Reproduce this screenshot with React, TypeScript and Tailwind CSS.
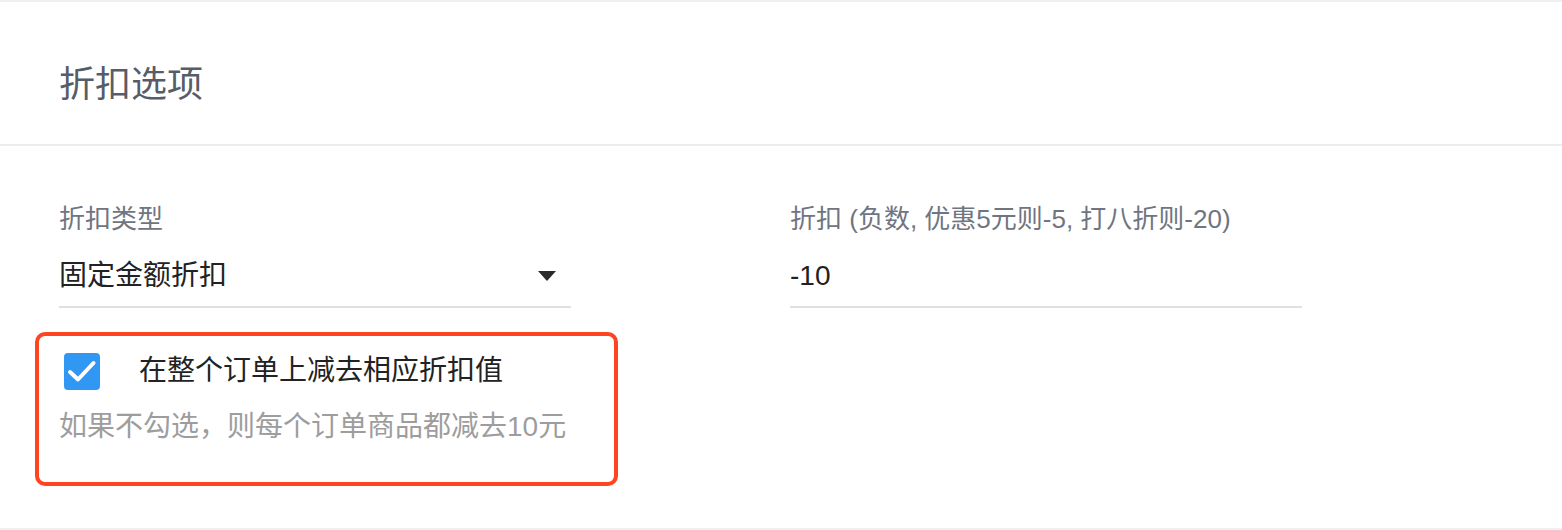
export default function App() {
  const font = { fontFamily: '"Liberation Sans", "Noto Sans CJK SC", sans-serif' }

  return (
    <div className="w-full h-[530px] bg-white border-t-2 border-b-2 border-[#efeff4] flex flex-col" style={font}>
      <div className="h-[144px] shrink-0 border-b-2 border-[#ededf1] px-[59px] pt-[57px]">
        <h2 className="text-[36px] leading-[52px] text-[#565c68]">折扣选项</h2>
      </div>

      <div className="px-[59px] pt-[55px]">
        <div className="flex gap-[219px]">
          <div className="w-[512px]">
            <label className="block text-[26px] leading-[36px] text-[#6f7581]">折扣类型</label>
            <div className="h-[71px] pt-[8px] flex items-center justify-between border-b-2 border-[#e0e0e0] pr-[15px]">
              <span className="text-[28px] text-[#222]">固定金额折扣</span>
              <svg width="18" height="10" viewBox="0 0 18 10">
                <path d="M0 0h18L9 10z" fill="#2a2a2a" />
              </svg>
            </div>
          </div>
          <div className="w-[512px]">
            <label className="block text-[26px] leading-[36px] text-[#6f7581]">折扣 (负数, 优惠5元则-5, 打八折则-20)</label>
            <div className="h-[71px] pt-[8px] flex items-center border-b-2 border-[#e0e0e0]">
              <span className="text-[28px] text-[#222]">-10</span>
            </div>
          </div>
        </div>

        <div className="mt-[24px] -ml-[24px] w-[583px] h-[154px] border-4 border-[#ff4422] rounded-[10px] pl-[25px] pt-[14px]">
          <div className="flex items-center gap-[39px]">
            <span className="w-[36px] h-[37px] shrink-0 rounded-[4px] bg-[#3097f2] relative">
              <svg className="absolute inset-0" width="36" height="37" viewBox="0 0 36 37" fill="none" stroke="#fff" strokeWidth="4" strokeLinecap="round" strokeLinejoin="round">
                <path d="M6 19l8 7.5L29.5 10" />
              </svg>
            </span>
            <span className="text-[28px] text-[#222]">在整个订单上减去相应折扣值</span>
          </div>
          <p className="mt-[15px] -ml-[5px] text-[28px] leading-[40px] text-[#9d9d9d]">如果不勾选，则每个订单商品都减去10元</p>
        </div>
      </div>
    </div>
  )
}
